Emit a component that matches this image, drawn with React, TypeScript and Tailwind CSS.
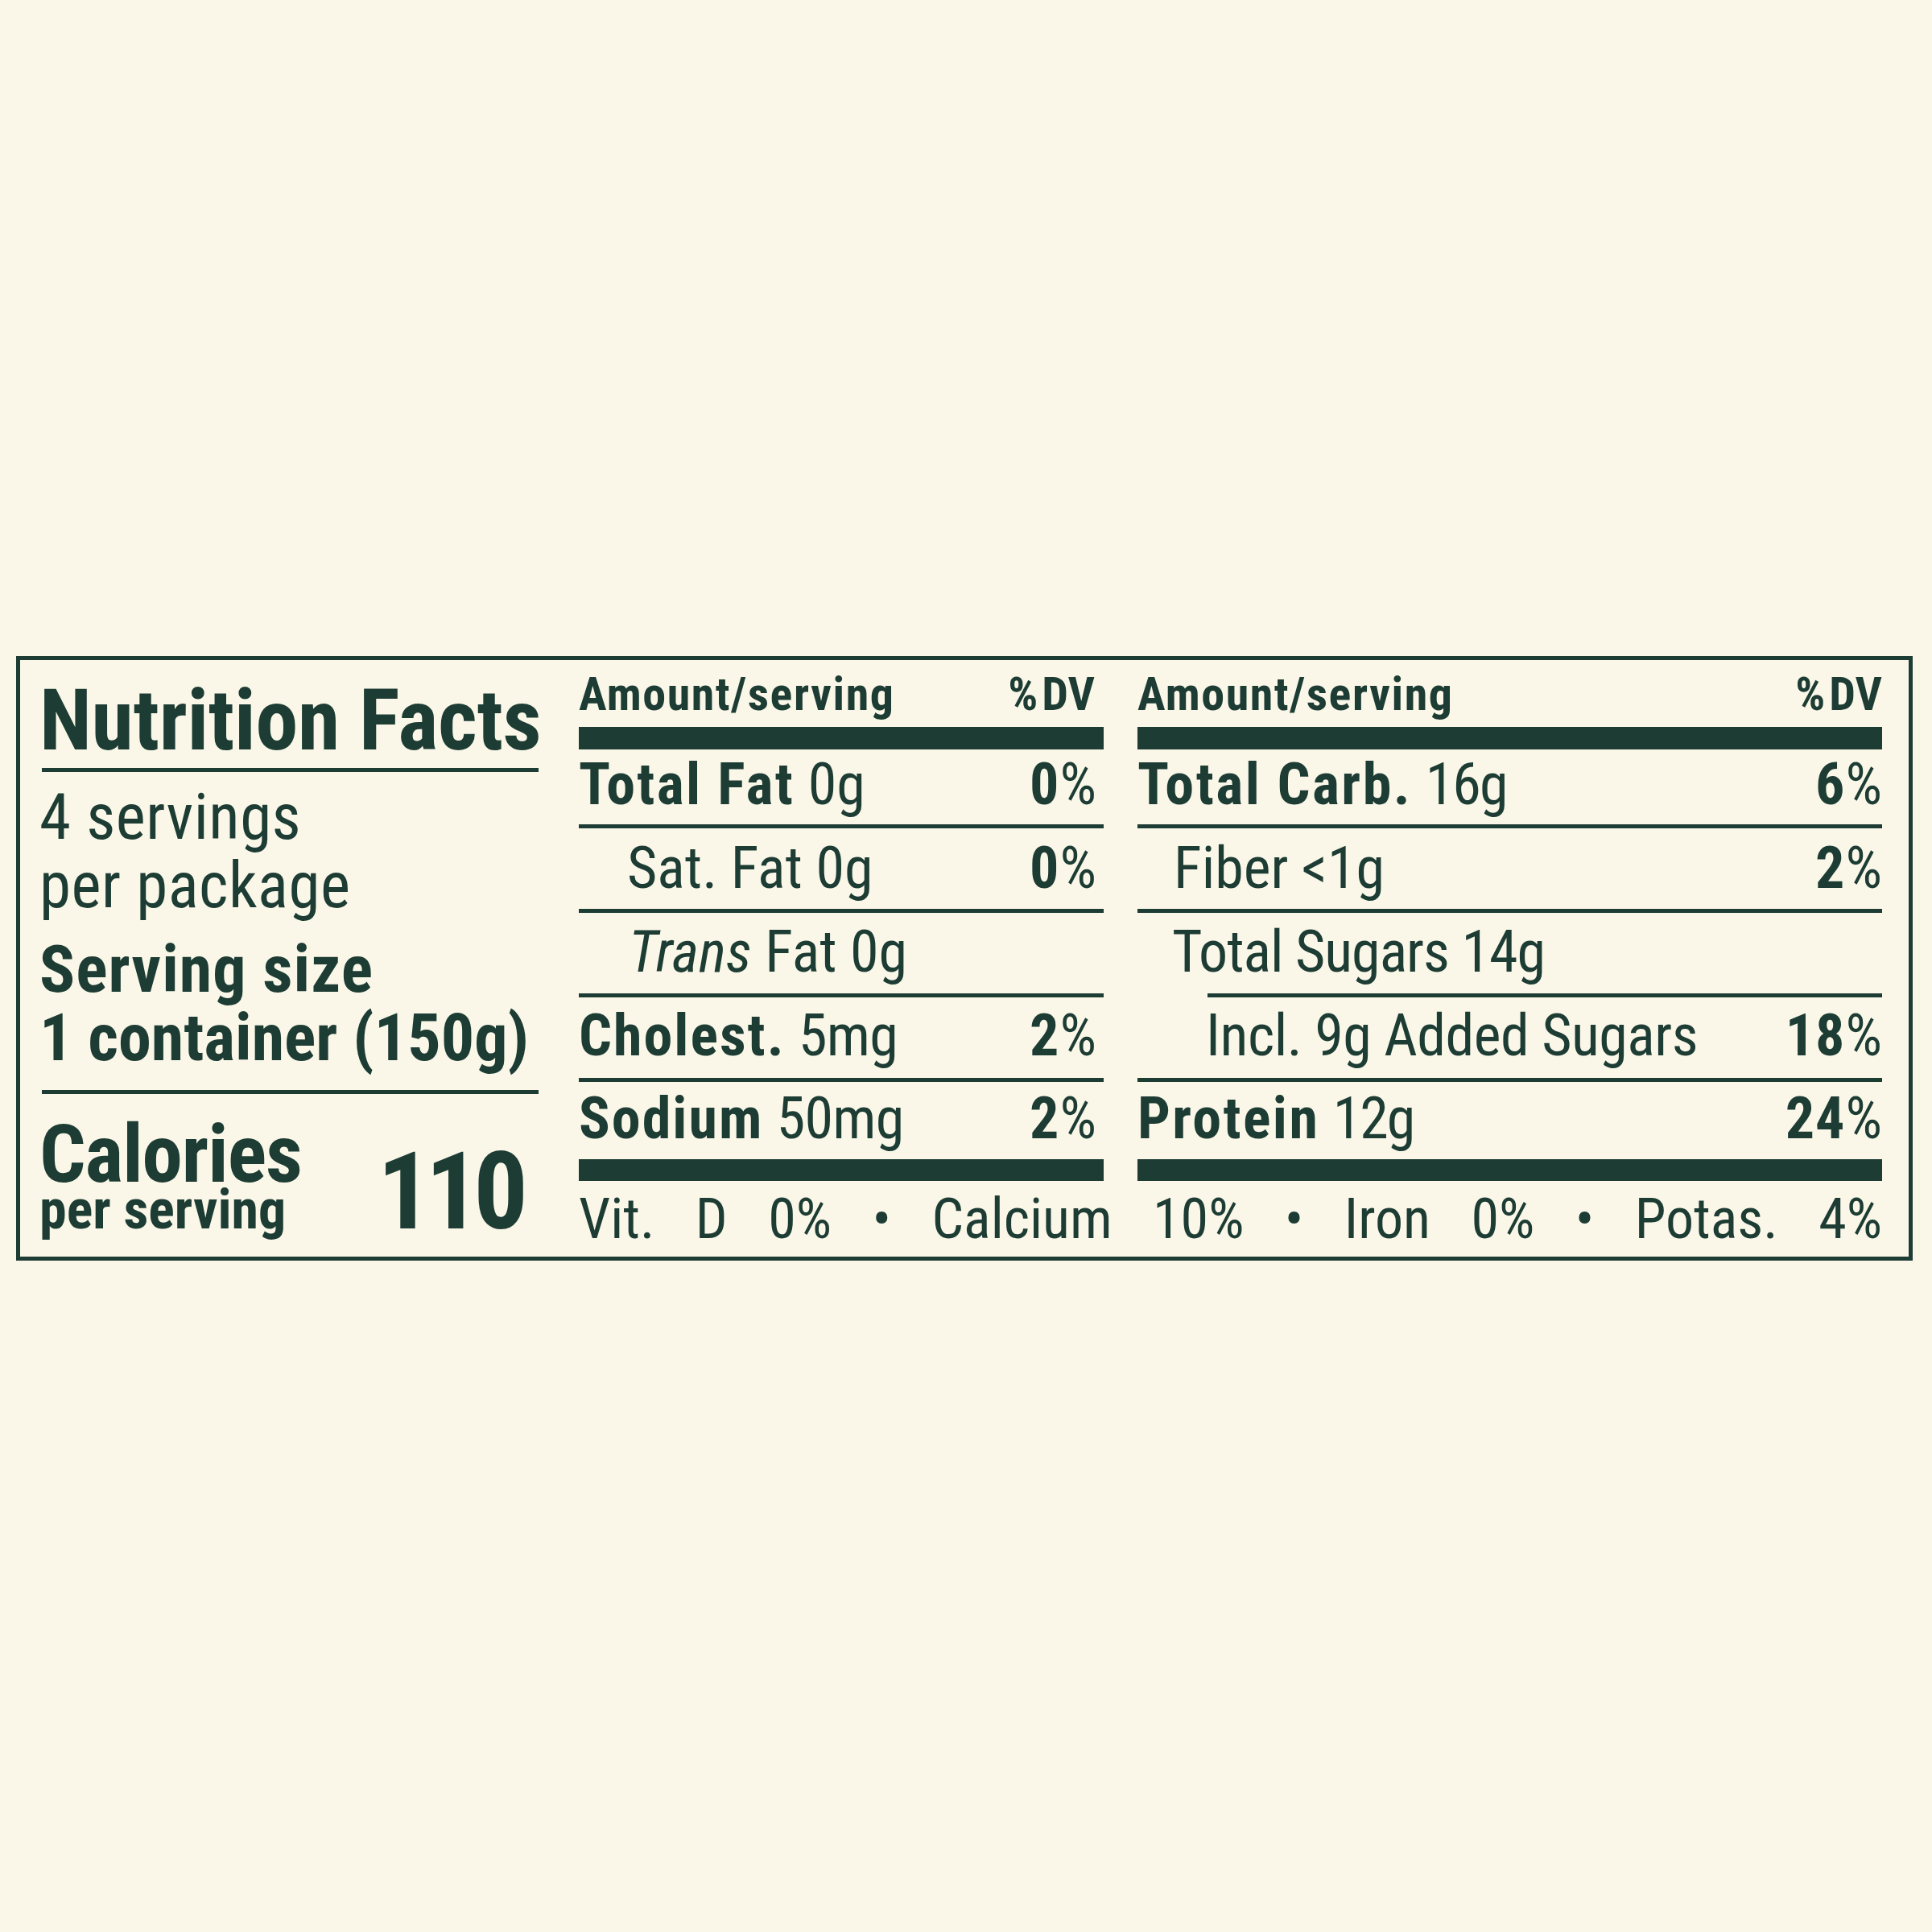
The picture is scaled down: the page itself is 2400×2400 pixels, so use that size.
import React from "react";

const ink = "text-[#1d3c34]";

function Pct({ n }: { n: string }) {
  return (
    <span>
      <span className="font-bold tracking-[1px]">{n}</span>
      <span className="font-normal">%</span>
    </span>
  );
}

export default function App() {
  return (
    <div
      className={`w-[2400px] h-[2400px] bg-[#faf7e8] ${ink} pt-[815px] pl-[20px] font-['Roboto_Condensed','Roboto',sans-serif] [font-stretch:condensed]`}
    >
      <div className="w-[2356px] h-[751px] border-[5px] border-[#1d3c34] flex pl-[24px] pr-[33px]">
        {/* Left column */}
        <div className="w-[620px] flex flex-col pt-[22px]">
          <div className="text-[106px] leading-[107px] font-bold tracking-[-0.3px] whitespace-nowrap">Nutrition Facts</div>
          <div className="mt-[5px] ml-[3px] h-[5px] bg-[#1d3c34]" />
          <div className="mt-[14px] text-[79px] leading-[85px] font-normal tracking-[0.5px]">
            <div>4 servings</div>
            <div>per package</div>
          </div>
          <div className="mt-[19px] text-[82px] leading-[85px] font-bold whitespace-nowrap">
            <div className="tracking-[1px]">Serving size</div>
            <div>1 container (150g)</div>
          </div>
          <div className="mt-[22px] ml-[3px] h-[5px] bg-[#1d3c34]" />
          <div className="flex items-end justify-between pr-[21px]">
            <div className="flex flex-col">
              <div className="mt-[32px] text-[101px] leading-[86px] font-bold tracking-[-1px]">Calories</div>
              <div className="text-[68px] leading-[52px] font-bold">per serving</div>
            </div>
            <div className="text-[134px] leading-[97px] font-bold tracking-[-8px]">110</div>
          </div>
        </div>

        {/* Right part */}
        <div className="ml-[50px] w-[1619px] flex flex-col">
          <div className="flex">
            {/* Middle column */}
            <div className="w-[652px] flex flex-col">
              <div className="h-[83px] pt-[14px] pr-[11px] flex justify-between text-[58px] leading-[56px] font-bold">
                <span className="tracking-[1.5px]">Amount/serving</span>
                <span>
                  <span className="mr-[5px]">%</span>DV
                </span>
              </div>
              <div className="h-[28px] bg-[#1d3c34]" />
              <div className="h-[98px] border-b-[5px] border-[#1d3c34] pt-[8px] pr-[9px] flex justify-between text-[72px] leading-[72px]">
                <span>
                  <span className="font-bold tracking-[2.3px]">Total Fat</span> 0g
                </span>
                <Pct n="0" />
              </div>
              <div className="h-[105px] border-b-[5px] border-[#1d3c34] pt-[14px] pr-[9px] pl-[60px] flex justify-between text-[72px] leading-[72px]">
                <span>Sat. Fat 0g</span>
                <Pct n="0" />
              </div>
              <div className="h-[105px] border-b-[5px] border-[#1d3c34] pt-[13px] pr-[9px] pl-[62px] flex justify-between text-[72px] leading-[72px]">
                <span>
                  <span className="italic">Trans</span> Fat 0g
                </span>
              </div>
              <div className="h-[105px] border-b-[5px] border-[#1d3c34] pt-[12px] pr-[9px] flex justify-between text-[72px] leading-[72px]">
                <span>
                  <span className="font-bold tracking-[2px]">Cholest.</span> <span className="tracking-[-0.8px]">5mg</span>
                </span>
                <Pct n="2" />
              </div>
              <div className="h-[96px] pt-[10px] pr-[9px] flex justify-between text-[72px] leading-[72px]">
                <span>
                  <span className="font-bold tracking-[2px]">Sodium</span> <span className="tracking-[-0.8px]">50mg</span>
                </span>
                <Pct n="2" />
              </div>
              <div className="h-[27px] bg-[#1d3c34]" />
            </div>

            {/* Right column */}
            <div className="ml-[42px] w-[925px] flex flex-col">
              <div className="h-[83px] pt-[14px] flex justify-between text-[58px] leading-[56px] font-bold">
                <span className="tracking-[1.5px]">Amount/serving</span>
                <span>
                  <span className="mr-[5px]">%</span>DV
                </span>
              </div>
              <div className="h-[28px] bg-[#1d3c34]" />
              <div className="h-[98px] border-b-[5px] border-[#1d3c34] pt-[8px] flex justify-between text-[72px] leading-[72px]">
                <span>
                  <span className="font-bold tracking-[2.5px]">Total Carb.</span> <span className="tracking-[-2px]">16g</span>
                </span>
                <Pct n="6" />
              </div>
              <div className="h-[105px] border-b-[5px] border-[#1d3c34] pt-[14px] pl-[45px] flex justify-between text-[72px] leading-[72px]">
                <span>Fiber &lt;1g</span>
                <Pct n="2" />
              </div>
              <div className="h-[105px] flex flex-col">
                <div className="pt-[13px] pl-[43px] text-[72px] leading-[72px] tracking-[-1px]">Total Sugars 14g</div>
                <div className="mt-auto ml-[87px] h-[5px] bg-[#1d3c34]" />
              </div>
              <div className="h-[105px] border-b-[5px] border-[#1d3c34] pt-[12px] pl-[85px] flex justify-between text-[72px] leading-[72px]">
                <span className="tracking-[-0.5px]">Incl. 9g Added Sugars</span>
                <Pct n="18" />
              </div>
              <div className="h-[96px] pt-[10px] flex justify-between text-[72px] leading-[72px]">
                <span>
                  <span className="font-bold tracking-[2.4px]">Protein</span> <span className="tracking-[-2px]">12g</span>
                </span>
                <Pct n="24" />
              </div>
              <div className="h-[27px] bg-[#1d3c34]" />
            </div>
          </div>

          {/* Vitamins row */}
          <div className="pt-[12px] flex justify-between text-[70px] leading-[70px] font-normal">
            <span>Vit.</span>
            <span>D</span>
            <span>0%</span>
            <span>•</span>
            <span>Calcium</span>
            <span>10%</span>
            <span>•</span>
            <span>Iron</span>
            <span>0%</span>
            <span>•</span>
            <span>Potas.</span>
            <span>4%</span>
          </div>
        </div>
      </div>
    </div>
  );
}
